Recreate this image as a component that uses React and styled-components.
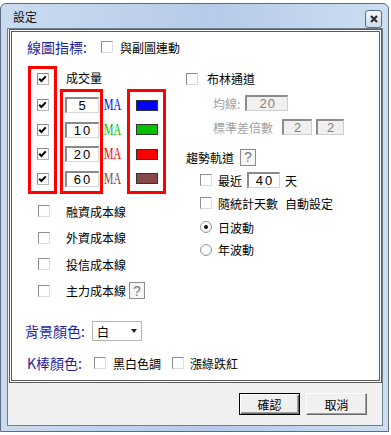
import React from "react";
import styled, { createGlobalStyle } from "styled-components";

const GlobalStyle = createGlobalStyle`
  html, body { margin: 0; padding: 0; background: #ffffff; }
  body {
    font-family: "Noto Sans CJK TC", "Noto Sans", sans-serif;
    font-size: 12px;
    color: #000;
  }
  #root { overflow: hidden; }
`;

const Window = styled.div`
  box-sizing: border-box;
  width: 389px;
  height: 429px;
  margin-top: 3px;
  border: 1px solid #5d6b80;
  border-radius: 6px 6px 0 0;
  background: linear-gradient(90deg, #cadbf0 0%, #b6cbe9 55%, #ccdef2 100%);
  padding: 0 5px 5px 6px;
  display: flex;
  flex-direction: column;
`;

const TitleBar = styled.div`
  height: 24px;
  display: flex;
  align-items: center;
  justify-content: space-between;
  padding-left: 6px;
`;

const Title = styled.span`
  font-size: 12px;
  color: #111;
`;

const CloseButton = styled.div`
  box-sizing: border-box;
  width: 17px;
  height: 18px;
  margin: 5px 1px 0 0;
  border: 1px solid #5c6c85;
  border-radius: 3px;
  background: linear-gradient(180deg, #f4f8fc 0%, #dde7f3 50%, #cfdcec 100%);
  display: flex;
  align-items: center;
  justify-content: center;
`;

const Client = styled.div`
  flex: 1;
  border: 1px solid #6f7d91;
  background: #f0f0f0;
  padding-left: 1px;
  display: flex;
  flex-direction: column;
`;

const Panel = styled.div`
  box-sizing: border-box;
  height: 354px;
  border: 3px double #5a5a5a;
  background: #fff;
  padding: 5px 0 0 15px;
  display: flex;
  flex-direction: column;
`;

const Row = styled.div`
  display: flex;
  align-items: center;
  height: ${(p) => p.$h || 20}px;
  margin-top: ${(p) => p.$mt || 0}px;
  padding-left: ${(p) => p.$pl || 0}px;
  gap: ${(p) => p.$gap || 0}px;
`;

const SectionTitle = styled.span`
  font-size: 14px;
  color: #1f1f9c;
  margin-right: ${(p) => p.$mr || 0}px;
  margin-left: ${(p) => p.$ml || 0}px;
`;

const Text = styled.span`
  font-size: 12px;
  color: ${(p) => (p.$dim ? "#a0a0a0" : "#000")};
  margin-left: ${(p) => p.$ml || 0}px;
  margin-right: ${(p) => p.$mr || 0}px;
  white-space: nowrap;
`;

const Box = styled.span`
  box-sizing: border-box;
  display: inline-flex;
  align-items: center;
  justify-content: center;
  flex-shrink: 0;
  width: 12px;
  height: 12px;
  border: 1px solid;
  border-color: ${(p) =>
    p.$checked ? "#8a8a8a #b8b8b8 #b8b8b8 #8a8a8a" : "#8e8e8e #dcdcdc #dcdcdc #8e8e8e"};
  background: #fff;
  margin-right: ${(p) => p.$mr || 0}px;
`;

const Checkbox = ({ checked, mr }) => (
  <Box $checked={checked} $mr={mr}>
    {checked && (
      <svg width="9" height="8" viewBox="0 0 9 8">
        <path d="M1.2 3.8 L3.4 6 L7.8 1.4" fill="none" stroke="#000" strokeWidth="2" />
      </svg>
    )}
  </Box>
);

const RadioCircle = styled.span`
  box-sizing: border-box;
  display: inline-flex;
  align-items: center;
  justify-content: center;
  flex-shrink: 0;
  width: 12px;
  height: 12px;
  border-radius: 50%;
  border: 1px solid #9a9a9a;
  background: radial-gradient(circle at 40% 40%, #ffffff 30%, #e2e2e2 100%);
  margin-right: ${(p) => p.$mr || 0}px;
`;

const RadioDot = styled.span`
  width: 4px;
  height: 4px;
  border-radius: 50%;
  background: #111;
`;

const Radio = ({ checked, mr }) => (
  <RadioCircle $mr={mr}>{checked && <RadioDot />}</RadioCircle>
);

const Main = styled.div`
  display: flex;
  margin-top: 9px;
  margin-left: 1px;
`;

const LeftCol = styled.div`
  display: flex;
  flex-direction: column;
`;

const MaGroup = styled.div`
  display: flex;
  align-items: flex-start;
  gap: 3px;
`;

const RedBox = styled.div`
  box-sizing: border-box;
  width: ${(p) => p.$w}px;
  border: 3px solid #ff0000;
  padding-top: ${(p) => p.$pt || 0}px;
  display: flex;
  flex-direction: column;
`;

const Cell = styled.div`
  height: ${(p) => p.$h}px;
  margin-bottom: ${(p) => p.$mb || 0}px;
  display: flex;
  align-items: center;
  justify-content: ${(p) => p.$justify || "center"};
`;

const RightPart = styled.div`
  display: flex;
  flex-direction: column;
`;

const VolumeLabel = styled.div`
  height: 23px;
  display: flex;
  align-items: center;
  padding-left: 6px;
`;

const MaRow = styled.div`
  display: flex;
  align-items: flex-start;
`;

const MaCol = styled.div`
  width: 23px;
  margin-left: 1px;
  padding-top: 4px;
  display: flex;
  flex-direction: column;
`;

const MaText = styled.span`
  display: inline-block;
  font-family: "Liberation Serif", serif;
  font-size: 16px;
  line-height: 1;
  color: ${(p) => p.$color};
  transform: scaleX(0.66);
  transform-origin: left center;
  white-space: nowrap;
`;

const NumInput = styled.div`
  box-sizing: border-box;
  width: ${(p) => p.$w || 34}px;
  height: 16px;
  border-style: solid;
  border-width: 2px 1px 1px 2px;
  border-color: ${(p) =>
    p.$disabled ? "#8c8c8c #cfcfcf #cfcfcf #8c8c8c" : "#8a8a8a #d6d6d6 #d6d6d6 #8a8a8a"};
  background: ${(p) => (p.$disabled ? "#f0f0f0" : "#fff")};
  color: ${(p) => (p.$disabled ? "#808080" : "#000")};
  font-family: "Liberation Sans", sans-serif;
  font-size: 13px;
  letter-spacing: ${(p) => (p.$disabled ? 1 : 2)}px;
  text-indent: ${(p) => (p.$disabled ? 1 : 2)}px;
  line-height: 13px;
  display: flex;
  align-items: center;
  justify-content: center;
  margin-right: ${(p) => p.$mr || 0}px;
`;

const Swatch = styled.div`
  box-sizing: border-box;
  width: 22px;
  height: 11px;
  border: 1px solid #333;
  background: ${(p) => p.$color};
`;

const CostList = styled.div`
  display: flex;
  flex-direction: column;
  margin-top: 4px;
  padding-left: 10px;
`;

const HelpBox = styled.span`
  box-sizing: border-box;
  display: inline-flex;
  align-items: center;
  justify-content: center;
  width: 16px;
  height: 17px;
  border: 1px solid #8c8c8c;
  background: #f6f6f6;
  color: #7a7a7a;
  font-family: "Liberation Sans", sans-serif;
  font-size: 14px;
  margin-left: ${(p) => p.$ml || 0}px;
`;

const RightCol = styled.div`
  display: flex;
  flex-direction: column;
  margin-left: 20px;
`;

const Select = styled.div`
  box-sizing: border-box;
  width: 50px;
  height: 20px;
  margin-left: 7px;
  border: 1px solid #b4b4b4;
  background: #fff;
  display: flex;
  align-items: center;
  justify-content: space-between;
  padding: 0 4px 0 4px;
`;

const Arrow = styled.span`
  width: 0;
  height: 0;
  border-left: 3.5px solid transparent;
  border-right: 3.5px solid transparent;
  border-top: 4px solid #222;
`;

const Footer = styled.div`
  flex: 1;
  display: flex;
  justify-content: flex-end;
  align-items: flex-start;
  gap: 6px;
  padding: 10px 15px 0 0;
`;

const Button = styled.div`
  box-sizing: border-box;
  width: 61px;
  height: 22px;
  display: flex;
  align-items: center;
  justify-content: center;
  font-size: 12px;
  background: #f0f0f0;
  border: 1px solid;
  border-color: ${(p) => (p.$primary ? "#000 #000 #000 #000" : "#ffffff #696969 #696969 #ffffff")};
  box-shadow: ${(p) =>
    p.$primary
      ? "inset 1px 1px 0 #ffffff, inset -1px -1px 0 #696969, inset -2px -2px 0 #a0a0a0"
      : "inset -1px -1px 0 #a0a0a0"};
`;

const maRows = [
  { n: "5", color: "#0000ff", swatch: "#0000ff" },
  { n: "10", color: "#00b800", swatch: "#00c000" },
  { n: "20", color: "#ff0000", swatch: "#ff0000" },
  { n: "60", color: "#8a4040", swatch: "#884848" },
];

const costLines = ["融資成本線", "外資成本線", "投信成本線", "主力成本線"];

export default function App() {
  return (
    <>
      <GlobalStyle />
      <Window>
        <TitleBar>
          <Title>設定</Title>
          <CloseButton>
            <svg width="8" height="8" viewBox="0 0 8 8">
              <path d="M1 1 L7 7 M7 1 L1 7" stroke="#2a2a2a" strokeWidth="2" />
            </svg>
          </CloseButton>
        </TitleBar>
        <Client>
          <Panel>
            <Row $h={20}>
              <SectionTitle $mr={14}>線圖指標:</SectionTitle>
              <Checkbox mr={7} />
              <Text>與副圖連動</Text>
            </Row>
            <Main>
              <LeftCol>
                <MaGroup>
                  <RedBox $w={29}>
                    <Cell $h={20} $mb={4}>
                      <Checkbox checked />
                    </Cell>
                    {maRows.map((r) => (
                      <Cell key={r.n} $h={24.5}>
                        <Checkbox checked />
                      </Cell>
                    ))}
                  </RedBox>
                  <RightPart>
                    <VolumeLabel>
                      <Text>成交量</Text>
                    </VolumeLabel>
                    <MaRow>
                      <RedBox $w={43} $pt={1}>
                        {maRows.map((r) => (
                          <Cell key={r.n} $h={24.5}>
                            <NumInput>{r.n}</NumInput>
                          </Cell>
                        ))}
                      </RedBox>
                      <MaCol>
                        {maRows.map((r) => (
                          <Cell key={r.n} $h={24.5} $justify="flex-start">
                            <MaText $color={r.color}>MA</MaText>
                          </Cell>
                        ))}
                      </MaCol>
                      <RedBox $w={39} $pt={1}>
                        {maRows.map((r) => (
                          <Cell key={r.n} $h={24.5}>
                            <Swatch $color={r.swatch} />
                          </Cell>
                        ))}
                      </RedBox>
                    </MaRow>
                  </RightPart>
                </MaGroup>
                <CostList>
                  {costLines.map((c, i) => (
                    <Row key={c} $h={26.5}>
                      <Checkbox mr={16} />
                      <Text>{c}</Text>
                      {i === 3 && <HelpBox $ml={3}>?</HelpBox>}
                    </Row>
                  ))}
                </CostList>
              </LeftCol>
              <RightCol>
                <Row $h={25}>
                  <Checkbox mr={9} />
                  <Text>布林通道</Text>
                </Row>
                <Row $h={24} $pl={27}>
                  <Text $dim $mr={5}>均線:</Text>
                  <NumInput $disabled $w={43}>20</NumInput>
                </Row>
                <Row $h={24} $pl={27}>
                  <Text $dim $mr={9}>標準差倍數</Text>
                  <NumInput $disabled $w={30} $mr={4}>2</NumInput>
                  <NumInput $disabled $w={28}>2</NumInput>
                </Row>
                <Row $h={24} $mt={6}>
                  <Text>趨勢軌道</Text>
                  <HelpBox $ml={6}>?</HelpBox>
                </Row>
                <Row $h={22} $pl={14}>
                  <Checkbox mr={6} />
                  <Text $mr={5}>最近</Text>
                  <NumInput $w={33} $mr={5}>40</NumInput>
                  <Text>天</Text>
                </Row>
                <Row $h={24} $pl={14}>
                  <Checkbox mr={6} />
                  <Text $mr={7}>隨統計天數</Text>
                  <Text>自動設定</Text>
                </Row>
                <Row $h={24} $pl={14}>
                  <Radio checked mr={6} />
                  <Text>日波動</Text>
                </Row>
                <Row $h={21} $pl={14}>
                  <Radio mr={6} />
                  <Text>年波動</Text>
                </Row>
              </RightCol>
            </Main>
            <Row $h={20} $mt={17}>
              <SectionTitle $ml={-2}>背景顏色:</SectionTitle>
              <Select>
                <Text>白</Text>
                <Arrow />
              </Select>
            </Row>
            <Row $h={20} $mt={12}>
              <SectionTitle $mr={12}>K棒顏色:</SectionTitle>
              <Checkbox mr={7} />
              <Text $mr={11}>黑白色調</Text>
              <Checkbox mr={6} />
              <Text>漲綠跌紅</Text>
            </Row>
          </Panel>
          <Footer>
            <Button $primary>確認</Button>
            <Button>取消</Button>
          </Footer>
        </Client>
      </Window>
    </>
  );
}
